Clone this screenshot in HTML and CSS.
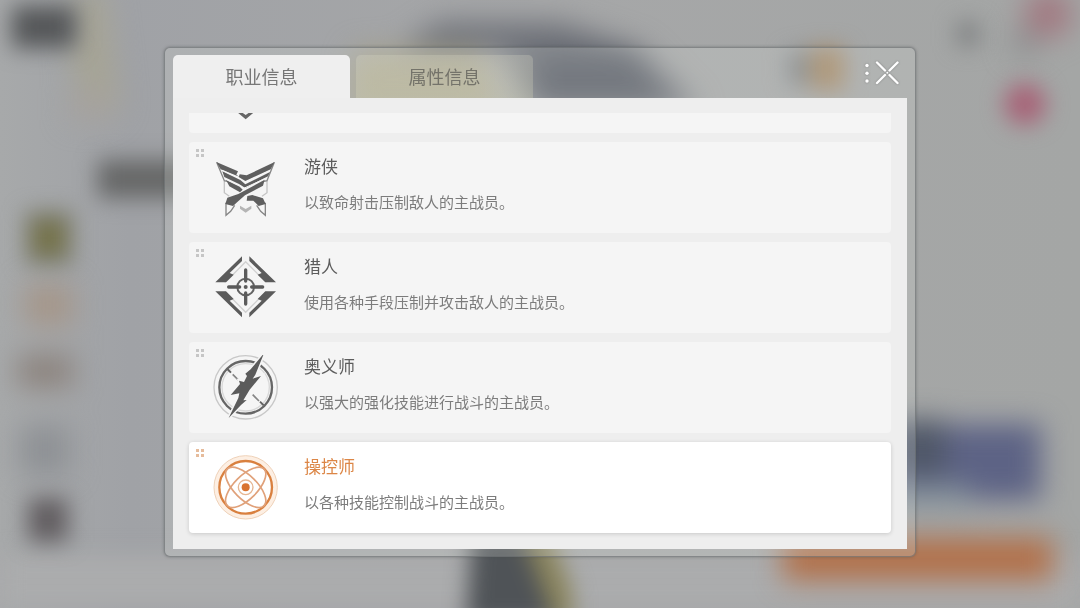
FILE: index.html
```html
<!DOCTYPE html>
<html lang="zh-CN">
<head>
<meta charset="utf-8">
<meta name="viewport" content="width=device-width, initial-scale=1">
<title>职业信息</title>
<link rel="stylesheet" href="styles.css">
</head>
<body>
<svg class="backdrop" viewBox="0 0 1080 608" preserveAspectRatio="none" aria-hidden="true">
  <defs>
    <linearGradient id="base" x1="0" y1="0" x2="1" y2="0">
      <stop offset="0" stop-color="#a7a9aa"/><stop offset=".12" stop-color="#a0a2a6"/><stop offset=".5" stop-color="#a6a7a8"/><stop offset="1" stop-color="#a4a6a5"/>
    </linearGradient>
    <filter id="soft" x="-50%" y="-50%" width="200%" height="200%" color-interpolation-filters="sRGB"><feGaussianBlur stdDeviation="14"/></filter>
    <filter id="fine" x="-50%" y="-50%" width="200%" height="200%" color-interpolation-filters="sRGB"><feGaussianBlur stdDeviation="11"/></filter>
  </defs>
  <rect width="1080" height="608" fill="url(#base)"/>
  <rect y="555" width="1080" height="53" fill="#abacad" filter="url(#fine)"/>
  <g filter="url(#soft)">
    <path d="M75 -10H105L120 110L90 120L70 60Z" fill="#a6a495"/>
    <rect x="70" y="90" width="40" height="30" fill="#a6a29d"/>
    <rect x="25" y="285" width="48" height="40" fill="#a59689"/>
    <rect x="18" y="355" width="55" height="32" fill="#8b827c"/>
    <rect x="20" y="425" width="50" height="50" fill="#8e9195"/>
    <path d="M355 50H480L500 110H345Z" fill="#a39e86"/>
    <path d="M400 48L440 22L560 22L640 48L700 110H530L500 50Z" fill="#70737a"/>
    <path d="M535 55H630L675 108H540Z" fill="#575b65"/>
    <circle cx="1048" cy="14" r="24" fill="#a27a82"/>
    <circle cx="1025" cy="42" r="14" fill="#8e8f90"/>
    <rect x="885" y="424" width="156" height="76" fill="#5d6385"/>
    <rect x="895" y="420" width="50" height="55" fill="#4f5767"/>
    <rect x="890" y="484" width="80" height="24" fill="#84909a"/>
    <rect x="783" y="538" width="270" height="42" fill="#b27049"/>
  </g>
  <g filter="url(#fine)">
    <rect x="12" y="6" width="64" height="42" fill="#555759"/>
    <rect x="98" y="160" width="100" height="38" fill="#666767"/>
    <rect x="26" y="212" width="46" height="52" fill="#777763"/>
    <rect x="38" y="226" width="22" height="24" fill="#77733f"/>
    <rect x="28" y="498" width="40" height="44" fill="#625e61"/>
    <rect x="788" y="52" width="22" height="33" fill="#7e8184"/>
    <rect x="810" y="48" width="34" height="42" fill="#a38662"/>
    <circle cx="1025" cy="104" r="21" fill="#a76478"/>
    <rect x="957" y="22" width="22" height="24" fill="#7f8182"/>
    <path d="M472 530H545L575 625H466Z" fill="#4f5357"/>
    <path d="M520 530H548L572 590V625H556Z" fill="#8a845c"/>
  </g>
</svg>

<main class="overlay">
  <section class="dialog" role="dialog" aria-label="职业信息">
    <header class="dialog-head">
      <div class="tabs" role="tablist">
        <button class="tab tab-active" type="button" role="tab" aria-selected="true">职业信息</button>
        <button class="tab" type="button" role="tab" aria-selected="false">属性信息</button>
      </div>
      <button class="close" type="button" aria-label="关闭">
        <svg width="36" height="24" viewBox="0 0 36 24" fill="none" stroke="#fff" stroke-width="2.400" stroke-linecap="round">
          <path d="M13 1.500L21 9.500M25.500 14L33.500 22M33.500 1.500L25.500 9.500M21 14L13 22"/>
          <circle cx="23.300" cy="11.800" r="1" fill="#fff" stroke="none"/>
          <g fill="#fff" stroke="none"><circle cx="3" cy="4.500" r="1.700"/><circle cx="3" cy="12.200" r="1.700"/><circle cx="3" cy="20" r="1.700"/></g>
        </svg>
      </button>
    </header>

    <div class="panel">
      <ul class="jobs">
        <li class="job">
          <svg class="job-icon" viewBox="69 45 195 195" aria-hidden="true">
            <path d="M141 216H154L167 225L180 216H193L167 238Z" fill="#666"/>
          </svg>
        </li>

        <li class="job">
          <svg class="grip" viewBox="0 0 8 8" aria-hidden="true"><path d="M0 0h3v3h-3zM5 0h3v3h-3zM0 5h3v3h-3zM5 5h3v3h-3z"/></svg>
          <svg class="job-icon" viewBox="69 45 195 195" aria-hidden="true">
            <g fill="none" stroke="#c4c4c4" stroke-width="4"><path d="M103 122V158L118 169M231 122V158L216 169"/></g>
            <path d="M150 197L167 207L184 197V206L167 218L150 206Z" fill="#b5b5b5"/>
            <g fill="none" stroke="#858585" stroke-width="4">
              <path d="M80 67L103 122L112 124M253 67L231 122L222 124"/>
              <path d="M108 188V226L122 214L134 196M226 188V226L212 214L200 196"/>
            </g>
            <g fill="#5f5f5f">
              <path d="M79 66L144 94L139 104L148 110L92 88Z"/>
              <path d="M254 66L242 88L166 123L146 111L149 103L170 106Z"/>
              <path d="M97 94L151 120L166 133L240 96L234 109L166 144L147 132L103 111Z"/>
              <path d="M108 120L149 140L158 149L150 157L118 139Z"/>
              <path d="M224 119L219 137L165 166L142 186L129 198L106 192L112 173L145 162Z"/>
              <path d="M172 168L187 165L219 175L227 192L206 198L190 182H170Z"/>
            </g>
            <path d="M97 91L144 113M163 128L240 92M104 116L156 140M159 146L229 114" stroke="#f5f5f5" stroke-width="3" fill="none"/>
          </svg>
          <div class="job-text">
            <h2 class="job-name">游侠</h2>
            <p class="job-desc">以致命射击压制敌人的主战员。</p>
          </div>
        </li>

        <li class="job">
          <svg class="grip" viewBox="0 0 8 8" aria-hidden="true"><path d="M0 0h3v3h-3zM5 0h3v3h-3zM0 5h3v3h-3zM5 5h3v3h-3z"/></svg>
          <svg class="job-icon" viewBox="69 45 195 195" aria-hidden="true">
            <path d="M167 65L242 141L167 217L92 141Z" fill="none" stroke="#d0d0d0" stroke-width="4"/>
            <path d="M74 127H260V155H74Z" fill="#f5f5f5"/>
            <g fill="#5b5b5b">
              <path d="M156 49V63L119 99L131 104L108 127H76Z"/>
              <path d="M178 49V63L215 99L203 104L226 127H258Z"/>
              <path d="M156 232V218L119 182L131 177L108 154H76Z"/>
              <path d="M178 232V218L215 182L203 177L226 154H258Z"/>
              <circle cx="167" cy="141" r="6"/>
            </g>
            <circle cx="167" cy="141" r="25" fill="none" stroke="#636363" stroke-width="6"/>
            <path d="M167 90V123M167 159V192M116 141H149M185 141H218" stroke="#5b5b5b" stroke-width="10" stroke-linecap="round"/>
          </svg>
          <div class="job-text">
            <h2 class="job-name">猎人</h2>
            <p class="job-desc">使用各种手段压制并攻击敌人的主战员。</p>
          </div>
        </li>

        <li class="job">
          <svg class="grip" viewBox="0 0 8 8" aria-hidden="true"><path d="M0 0h3v3h-3zM5 0h3v3h-3zM0 5h3v3h-3zM5 5h3v3h-3z"/></svg>
          <svg class="job-icon" viewBox="69 45 195 195" aria-hidden="true">
            <g fill="none">
              <circle cx="167" cy="142" r="95" stroke="#c8c8c8" stroke-width="4"/>
              <circle cx="167" cy="142" r="71" stroke="#d8d8d8" stroke-width="4"/>
              <circle cx="167" cy="142" r="79" stroke="#666" stroke-width="7"/>
              <path d="M112 87L123 98M210 185L221 196" stroke="#626262" stroke-width="6"/>
              <path d="M128 103L146 121M188 164L207 183" stroke="#858585" stroke-width="5"/>
            </g>
            <path d="M222 40L196 104L188 116L213 108L179 149L160 181L170 180L153 195L116 234L145 174L148 160L122 165L150 132L147 122L162 126L171 108L166 101L182 88Z" fill="#f5f5f5" stroke="#f5f5f5" stroke-width="9"/>
            <path d="M222 40L196 104L188 116L213 108L179 149L160 181L170 180L153 195L116 234L145 174L148 160L122 165L150 132L147 122L162 126L171 108L166 101L182 88Z" fill="#5b5b5b"/>
          </svg>
          <div class="job-text">
            <h2 class="job-name">奥义师</h2>
            <p class="job-desc">以强大的强化技能进行战斗的主战员。</p>
          </div>
        </li>

        <li class="job job-current" aria-current="true">
          <svg class="grip" viewBox="0 0 8 8" aria-hidden="true"><path d="M0 0h3v3h-3zM5 0h3v3h-3zM0 5h3v3h-3zM5 5h3v3h-3z"/></svg>
          <svg class="job-icon" viewBox="69 45 195 195" aria-hidden="true">
            <g fill="none">
              <circle cx="167" cy="142" r="88" stroke="#fdefe3" stroke-width="14"/>
              <circle cx="167" cy="142" r="95" stroke="#efd2b9" stroke-width="3"/>
              <circle cx="167" cy="142" r="79" stroke="#d9803f" stroke-width="7"/>
              <g stroke="#e0a17a" stroke-width="5">
                <ellipse cx="167" cy="142" rx="78" ry="35" transform="rotate(45 167 142)"/>
                <ellipse cx="167" cy="142" rx="78" ry="35" transform="rotate(-45 167 142)"/>
              </g>
              <circle cx="167" cy="142" r="22" stroke="#e6b591" stroke-width="4"/>
            </g>
            <circle cx="167" cy="142" r="12" fill="#d97330"/>
          </svg>
          <div class="job-text">
            <h2 class="job-name">操控师</h2>
            <p class="job-desc">以各种技能控制战斗的主战员。</p>
          </div>
        </li>
      </ul>
    </div>
  </section>
</main>
</body>
</html>
```

FILE: styles.css
```css
* { box-sizing: border-box; }

body {
  margin: 0;
  min-height: 100vh;
  background: #a4a6a7;
  color: #555;
  font-family: "Noto Sans CJK SC", sans-serif;
  overflow: hidden;
}

.backdrop {
  position: fixed;
  inset: 0;
  z-index: -1;
  width: 100%;
  height: 100%;
}

.overlay { padding: 47px 164px; }

.dialog {
  padding: 7px 8px;
  border: 1px solid rgba(100, 104, 106, .6);
  border-radius: 6px;
  background: rgba(225, 228, 225, .22);
  box-shadow: 0 0 3px rgba(70, 74, 76, .5);
}

.dialog-head {
  display: flex;
  justify-content: space-between;
  align-items: flex-start;
}

.tabs {
  display: flex;
  gap: 6px;
}

.tab {
  width: 177px;
  height: 43px;
  padding: 0 0 2px;
  border: 0;
  border-radius: 5px 5px 0 0;
  background: linear-gradient(rgba(225, 224, 205, .25), rgba(225, 224, 190, .25));
  color: #74736a;
  font: inherit;
  font-size: 18px;
  line-height: 24px;
}

.tab-active {
  background: #efefef;
  color: #777;
}

.close {
  margin: 6px 7px 0 0;
  padding: 0;
  border: 0;
  background: none;
  line-height: 0;
  filter: drop-shadow(0 0 1px rgba(80, 80, 80, .5));
}

.panel {
  padding-top: 15px;
  background: #eee;
}

.jobs {
  display: flex;
  flex-direction: column;
  justify-content: flex-end;
  gap: 9px;
  height: calc(100vh - 172px);
  margin: 0;
  padding: 0 16px 16px;
  overflow: hidden;
  list-style: none;
}

.job {
  position: relative;
  display: flex;
  flex-shrink: 0;
  align-items: flex-start;
  gap: 26px;
  padding: 13px 24px;
  border-radius: 4px;
  background: #f5f5f5;
}

.job-current {
  background: #fff;
  box-shadow: 0 1px 4px rgba(0, 0, 0, .16);
}

.grip {
  position: absolute;
  top: 7px;
  left: 7px;
  width: 8px;
  height: 8px;
  fill: #c6c6c6;
}

.job-current .grip { fill: #e6bc9c; }

.job-icon {
  width: 65px;
  height: 65px;
}

.job-text {
  display: grid;
  align-content: start;
  gap: 13px;
}

.job-name,
.job-desc {
  margin: 0;
  font-weight: 400;
}

.job-name {
  color: #5c5c5c;
  font-size: 17px;
  line-height: 22px;
}

.job-desc {
  color: #7c7c7c;
  font-size: 15px;
  line-height: 24px;
}

.job-current .job-name { color: #dc8646; }
```
